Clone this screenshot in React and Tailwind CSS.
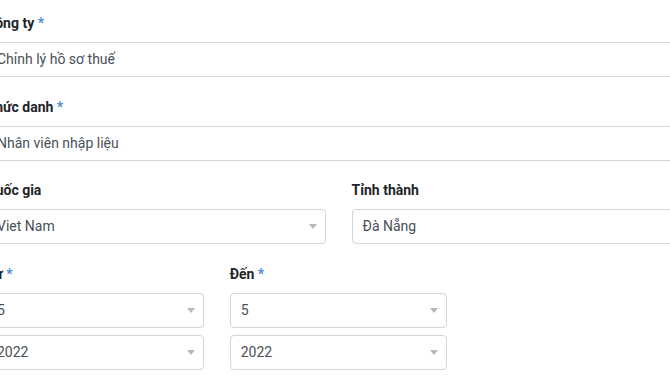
import React from "react";

const Label = ({ text, req }) => (
  <div className="mb-2 text-[14px] font-bold leading-[21px] text-[#212529] whitespace-nowrap">
    {text}
    {req && <span className="text-[#4f8ad1]"> *</span>}
  </div>
);

const Input = ({ value, rounded }) => (
  <div
    className={`flex h-[35px] items-center border border-[#d4d4d4] bg-white pl-[10px] text-[14px] text-[#495057] whitespace-nowrap ${
      rounded ? "rounded-[4px]" : ""
    }`}
  >
    {value}
  </div>
);

const Select = ({ value }) => (
  <div className="flex h-[35px] items-center justify-between rounded-[4px] border border-[#d4d4d4] bg-white pl-[10px] pr-[8px] text-[14px] text-[#495057] whitespace-nowrap">
    <span>{value}</span>
    <span className="h-0 w-0 border-x-[4px] border-t-[5px] border-x-transparent border-t-[#b9b9b9]" />
  </div>
);

export default function App() {
  return (
    <div
      className="h-[377px] w-[670px] overflow-hidden bg-white"
      style={{ fontFamily: "Roboto, 'Noto Sans', sans-serif" }}
    >
      <div className="ml-[-14px] w-[705px] pt-[13px]">
        <div className="mb-[19.5px]">
          <Label text="Công ty" req />
          <Input value="Chỉnh lý hồ sơ thuế" />
        </div>
        <div className="mb-[19.5px]">
          <Label text="Chức danh" req />
          <Input value="Nhân viên nhập liệu" />
        </div>
        <div className="mb-[19.5px] grid grid-cols-2 gap-x-[26px]">
          <div>
            <Label text="Quốc gia" />
            <Select value="Viet Nam" />
          </div>
          <div>
            <Label text="Tỉnh thành" />
            <Input value="Đà Nẵng" rounded />
          </div>
        </div>
        <div className="grid grid-cols-3 gap-x-[26px]">
          <div className="flex flex-col">
            <Label text="Từ" req />
            <Select value="5" />
            <div className="mt-[7.5px]">
              <Select value="2022" />
            </div>
          </div>
          <div className="flex flex-col">
            <Label text="Đến" req />
            <Select value="5" />
            <div className="mt-[7.5px]">
              <Select value="2022" />
            </div>
          </div>
          <div />
        </div>
      </div>
    </div>
  );
}
